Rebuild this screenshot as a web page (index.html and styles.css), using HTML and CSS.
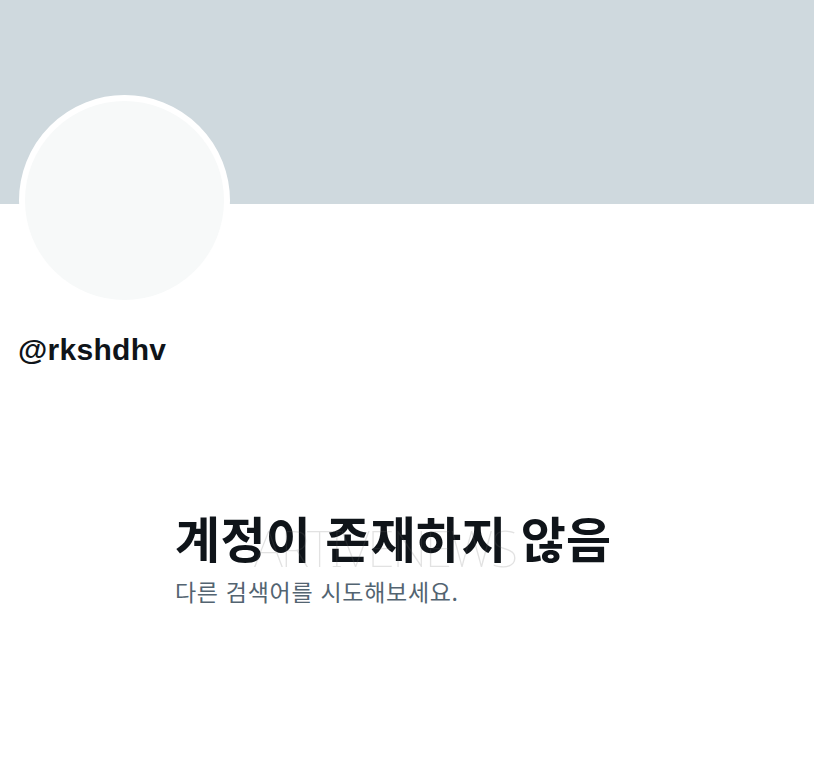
FILE: index.html
```html
<!DOCTYPE html>
<html lang="ko">
<head>
 <meta charset="UTF-8">
 <meta name="viewport" content="width=device-width, initial-scale=1">
 <title>@rkshdhv</title>
 <link rel="stylesheet" href="styles.css">
</head>
<body>
 <div class="banner"></div>

 <div class="profile">
  <div class="avatar"></div>
  <div class="handle">@rkshdhv</div>
 </div>

 <div class="empty-state">
  <div class="empty-title">
   <h1>계정이 존재하지 않음</h1>
   <span class="watermark">ARTIVENEWS</span>
  </div>
  <p class="empty-text">다른 검색어를 시도해보세요.</p>
 </div>
</body>
</html>
```

FILE: styles.css
```css
:root {
 --banner-color: #cfd9de;
 --avatar-color: #f7f9f9;
 --text-color: #0f1419;
 --muted-color: #536471;
}

html,
body {
 margin: 0;
 padding: 0;
 background-color: #ffffff;
}

body {
 font-family: "Liberation Sans", Arial, sans-serif;
 color: var(--text-color);
}

.banner {
 height: 204px;
 background-color: var(--banner-color);
}

/* Avatar overlaps the bottom of the banner */
.profile {
 padding: 0 19px;
}

.avatar {
 width: 199px;
 height: 199px;
 margin-top: -109px;
 border: 6px solid #ffffff;
 border-radius: 50%;
 background-color: var(--avatar-color);
}

.handle {
 margin-top: 26px;
 margin-left: -1px;
 font-size: 30px;
 font-weight: 700;
 line-height: 36px;
 letter-spacing: 0.3px;
}

/* --- Empty state --- */
.empty-state {
 width: 464px;
 margin: 140px auto 0;
}

.empty-title {
 position: relative;
}

.empty-title h1 {
 margin: 0;
 font-family: "Noto Sans CJK KR", sans-serif;
 font-size: 49px;
 font-weight: 700;
 line-height: 58px;
 letter-spacing: 0.3px;
}

.watermark {
 position: absolute;
 top: 11px;
 left: 79px;
 font-family: "Noto Sans", sans-serif;
 font-size: 50px;
 font-weight: 100;
 line-height: 58px;
 letter-spacing: -2.4px;
 color: rgba(110, 110, 110, 0.2);
 pointer-events: none;
}

.empty-text {
 margin: 10px 0 0;
 font-family: "Noto Sans CJK KR", sans-serif;
 font-size: 23px;
 line-height: 30px;
 letter-spacing: 0.7px;
 color: var(--muted-color);
}
```
